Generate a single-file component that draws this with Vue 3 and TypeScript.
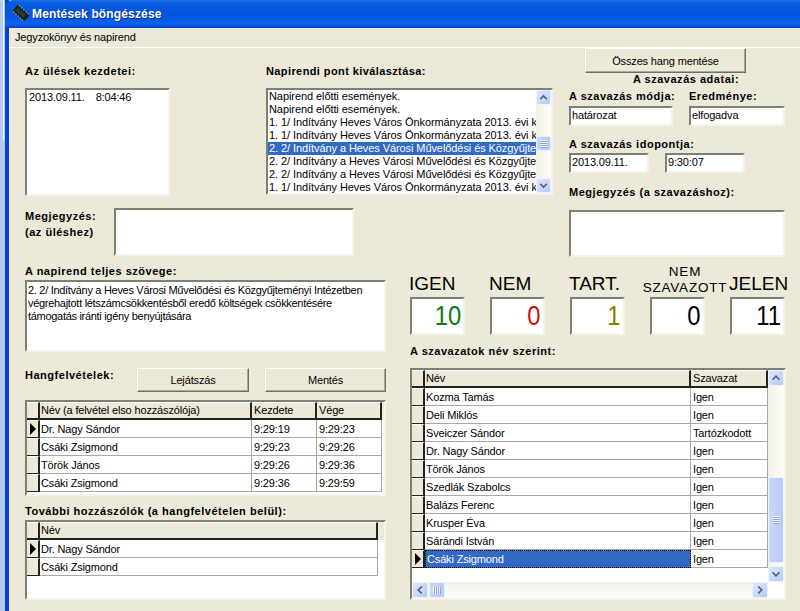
<script setup lang="ts">
interface Tally {
  label: string;
  value: number;
  tone: string;
}

const agenda: string[] = [
  "Napirend előtti események.",
  "Napirend előtti események.",
  "1. 1/ Indítvány Heves Város Önkormányzata 2013. évi költségvetés",
  "1. 1/ Indítvány Heves Város Önkormányzata 2013. évi költségvetés",
  "2. 2/ Indítvány a Heves Városi Művelődési és Közgyűjteményi Intézetben",
  "2. 2/ Indítvány a Heves Városi Művelődési és Közgyűjteményi Intézetben",
  "2. 2/ Indítvány a Heves Városi Művelődési és Közgyűjteményi Intézetben",
  "1. 1/ Indítvány Heves Város Önkormányzata 2013. évi költségvetés",
];
const selectedAgenda = 4;

const tallies: Tally[] = [
  { label: "IGEN", value: 10, tone: "green" },
  { label: "NEM", value: 0, tone: "red" },
  { label: "TART.", value: 1, tone: "olive" },
  { label: "NEM SZAVAZOTT", value: 0, tone: "black" },
  { label: "JELEN", value: 11, tone: "black" },
];

const recordings = [
  { name: "Dr. Nagy Sándor", start: "9:29:19", end: "9:29:23" },
  { name: "Csáki Zsigmond", start: "9:29:23", end: "9:29:26" },
  { name: "Török János", start: "9:29:26", end: "9:29:36" },
  { name: "Csáki Zsigmond", start: "9:29:36", end: "9:29:59" },
];

const speakers = ["Dr. Nagy Sándor", "Csáki Zsigmond"];

const votes = [
  { name: "Kozma Tamás", vote: "Igen" },
  { name: "Deli Miklós", vote: "Igen" },
  { name: "Sveiczer Sándor", vote: "Tartózkodott" },
  { name: "Dr. Nagy Sándor", vote: "Igen" },
  { name: "Török János", vote: "Igen" },
  { name: "Szedlák Szabolcs", vote: "Igen" },
  { name: "Balázs Ferenc", vote: "Igen" },
  { name: "Krusper Éva", vote: "Igen" },
  { name: "Sárándi István", vote: "Igen" },
  { name: "Csáki Zsigmond", vote: "Igen" },
];
</script>

<template>
  <div class="screen">
    <div class="desk"></div>
    <div class="window">
      <header class="titlebar">
        <svg class="chip" width="18" height="16" viewBox="0 0 18 16">
          <g transform="rotate(42 9 8)">
            <rect x="1" y="4" width="16" height="8" rx="1" fill="#16201c" />
            <path d="M3 3v10M6 3v10M9 3v10M12 3v10M15 3v10" stroke="#c9b25a" stroke-width="1" stroke-dasharray="1.5 7" />
            <rect x="3" y="6" width="11" height="4" fill="#2c3a34" />
          </g>
        </svg>
        <span class="title">Mentések böngészése</span>
      </header>
      <nav class="menubar"><span>Jegyzokönyv és napirend</span></nav>

      <main class="form">
        <section class="top">
          <div class="sessions">
            <h4>Az ülések kezdetei:</h4>
            <div class="field sessions-list">
              <span>2013.09.11.</span><span>8:04:46</span>
            </div>
          </div>

          <div class="agenda">
            <h4 class="agenda-label">Napirendi pont kiválasztása:</h4>
            <div class="field agenda-list">
              <ul>
                <li v-for="(item, i) in agenda" :key="i" :class="{ picked: i === selectedAgenda }">{{ item }}</li>
              </ul>
              <div class="vscroll small">
                <button class="sb-btn"><svg viewBox="0 0 16 16"><path d="M4 10l4-4 4 4" /></svg></button>
                <div class="track">
                  <div class="thumb agenda-thumb"><i class="grip"></i></div>
                </div>
                <button class="sb-btn"><svg viewBox="0 0 16 16"><path d="M4 6l4 4 4-4" /></svg></button>
              </div>
            </div>
          </div>

          <div class="session-note">
            <h4>Megjegyzés:<br />(az üléshez)</h4>
            <div class="field note-box"></div>
          </div>

          <aside class="vote-data">
            <button class="btn save-all">Összes hang mentése</button>
            <h4 class="centered">A szavazás adatai:</h4>
            <div class="pair">
              <div class="mode">
                <h4>A szavazás módja:</h4>
                <div class="field line">határozat</div>
              </div>
              <div class="result">
                <h4>Eredménye:</h4>
                <div class="field line">elfogadva</div>
              </div>
            </div>
            <h4 class="time-label">A szavazás idopontja:</h4>
            <div class="times">
              <div class="field line">2013.09.11.</div>
              <div class="field line">9:30:07</div>
            </div>
            <h4 class="vote-note-label">Megjegyzés (a szavazáshoz):</h4>
            <div class="field vote-note"></div>
          </aside>
        </section>

        <section class="bottom">
          <div class="left">
            <h4 class="full-label">A napirend teljes szövege:</h4>
            <div class="field full-text">
              2. 2/ Indítvány a Heves Városi Művelődési és Közgyűjteményi Intézetben végrehajtott létszámcsökkentésből
              eredő költségek csökkentésére támogatás iránti igény benyújtására
            </div>

            <div class="audio-bar">
              <h4>Hangfelvételek:</h4>
              <button class="btn play">Lejátszás</button>
              <button class="btn save">Mentés</button>
            </div>

            <div class="field grid recordings">
              <div class="row head">
                <div class="ind"></div>
                <div class="cell">Név (a felvétel elso hozzászólója)</div>
                <div class="cell">Kezdete</div>
                <div class="cell">Vége</div>
              </div>
              <div v-for="(r, i) in recordings" :key="i" class="row">
                <div class="ind"><i v-if="i === 0" class="arrow"></i></div>
                <div class="cell">{{ r.name }}</div>
                <div class="cell">{{ r.start }}</div>
                <div class="cell">{{ r.end }}</div>
              </div>
            </div>

            <h4 class="others-label">További hozzászólók (a hangfelvételen belül):</h4>
            <div class="field grid others">
              <div class="row head">
                <div class="ind"></div>
                <div class="cell">Név</div>
              </div>
              <div v-for="(s, i) in speakers" :key="i" class="row">
                <div class="ind"><i v-if="i === 0" class="arrow"></i></div>
                <div class="cell">{{ s }}</div>
              </div>
            </div>
          </div>

          <div class="right">
            <div class="tallies">
              <div v-for="t in tallies" :key="t.label" class="tally">
                <div class="tally-label" :class="{ long: t.label.length > 6 }">{{ t.label }}</div>
                <div class="field tally-box">
                  <span :class="t.tone">{{ t.value }}</span>
                </div>
              </div>
            </div>

            <h4 class="votes-label">A szavazatok név szerint:</h4>
            <div class="field votes">
              <div class="votes-main">
                <div class="grid votes-rows">
                  <div class="row head">
                    <div class="ind"></div>
                    <div class="cell">Név</div>
                    <div class="cell">Szavazat</div>
                  </div>
                  <div v-for="(v, i) in votes" :key="v.name" class="row">
                    <div class="ind"><i v-if="i === votes.length - 1" class="arrow"></i></div>
                    <div class="cell" :class="{ current: i === votes.length - 1 }">{{ v.name }}</div>
                    <div class="cell">{{ v.vote }}</div>
                  </div>
                </div>
                <div class="vscroll">
                  <button class="sb-btn"><svg viewBox="0 0 16 16"><path d="M4 10l4-4 4 4" /></svg></button>
                  <div class="track">
                    <div class="thumb votes-thumb"><i class="grip"></i></div>
                  </div>
                  <button class="sb-btn"><svg viewBox="0 0 16 16"><path d="M4 6l4 4 4-4" /></svg></button>
                </div>
              </div>
              <div class="hscroll">
                <button class="sb-btn"><svg viewBox="0 0 16 16"><path d="M10 4l-4 4 4 4" /></svg></button>
                <div class="thumb hthumb"><i class="grip vertical"></i></div>
                <div class="htrack"></div>
                <button class="sb-btn"><svg viewBox="0 0 16 16"><path d="M6 4l4 4-4 4" /></svg></button>
              </div>
            </div>
          </div>
        </section>
      </main>
    </div>
  </div>
</template>

<style scoped>
.screen {
  width: 800px;
  height: 611px;
  display: flex;
  overflow: hidden;
  background: #b3ccf2;
  font-family: "Liberation Sans", Arial, sans-serif;
  font-size: 11px;
  letter-spacing: -0.15px;
  color: #000;
}
.desk {
  width: 5px;
  flex: none;
  background: linear-gradient(90deg, #b3ccf2 60%, #f2f6fd 60%, #f2f6fd 80%, #b3ccf2 80%) no-repeat 0 0 / 100% 140px;
}
.window {
  flex: 1;
  min-width: 0;
  display: flex;
  flex-direction: column;
  border-left: 4px solid #0b3fce;
  background: #ece9d8;
}
.titlebar {
  height: 28px;
  flex: none;
  display: flex;
  align-items: center;
  margin-left: -4px;
  padding-left: 7px;
  border-top-left-radius: 8px;
  background: linear-gradient(#1a6ee8 0, #0a5be0 12%, #0453dc 50%, #0a62ee 85%, #0445c4 100%);
}
.chip {
  margin-right: 2px;
  margin-top: -2px;
}
.title {
  color: #fff;
  font-size: 12px;
  font-weight: bold;
  letter-spacing: 0.15px;
  text-shadow: 1px 1px 0 #0a2f8f;
}
.menubar {
  height: 18px;
  flex: none;
  display: flex;
  align-items: center;
  padding: 0 0 1px 6px;
  border-bottom: 1px solid #fff;
  box-sizing: content-box;
}
.form {
  flex: 1;
  min-height: 0;
  padding-left: 16px;
}
h4 {
  margin: 0;
  font-size: 11px;
  line-height: 14px;
  font-weight: bold;
  letter-spacing: 0.52px;
  white-space: nowrap;
}
.field {
  box-sizing: border-box;
  background: #fff;
  border: 2px solid;
  border-color: #807f75 #f4f3ec #f4f3ec #807f75;
}
.btn {
  font: inherit;
  letter-spacing: inherit;
  color: #000;
  background: #ece9d8;
  border: 1px solid;
  border-color: #fff #716f64 #716f64 #fff;
  box-shadow: inset -1px -1px 0 #aca899;
  padding: 0;
}

/* upper block */
.top {
  display: grid;
  grid-template-columns: 241px 303px 216px;
  grid-template-rows: 160px 49px;
  height: 209px;
}
.sessions,
.agenda {
  padding-top: 16px;
}
.agenda-label {
  letter-spacing: 0.4px;
}
.sessions-list {
  width: 145px;
  height: 108px;
  margin-top: 10px;
  padding: 1px 2px;
  line-height: 13px;
}
.sessions-list span:first-child {
  margin-right: 11px;
}
.agenda-list {
  width: 287px;
  height: 107px;
  margin-top: 10px;
  display: flex;
}
.agenda-list ul {
  flex: 1;
  min-width: 0;
  margin: 0;
  padding: 0;
  list-style: none;
  overflow: hidden;
}
.agenda-list li {
  height: 13px;
  line-height: 13px;
  padding-left: 1px;
  letter-spacing: -0.08px;
  white-space: nowrap;
  overflow: hidden;
}
.agenda-list li.picked {
  background: #316ac5;
  color: #fff;
}
.session-note {
  grid-column: 1 / 3;
  display: flex;
}
.session-note h4 {
  width: 89px;
  line-height: 16px;
}
.note-box {
  width: 240px;
  height: 48px;
}
.vote-data {
  grid-column: 3;
  grid-row: 1 / 3;
  display: flex;
  flex-direction: column;
}
.save-all {
  width: 161px;
  height: 25px;
  margin-left: 16px;
  flex: none;
}
.centered {
  text-align: center;
  margin-left: 18px;
  line-height: 13px;
}
.pair {
  display: flex;
  gap: 16px;
  margin-top: 3px;
}
.mode {
  width: 104px;
}
.result {
  width: 96px;
}
.line {
  height: 20px;
  line-height: 15px;
  padding-left: 1px;
  margin-top: 3px;
}
.time-label {
  margin-top: 11px;
}
.times {
  display: flex;
  gap: 16px;
}
.times .line {
  width: 80px;
  margin-top: 2px;
}
.vote-note-label {
  margin-top: 12px;
}
.vote-note {
  height: 48px;
  margin-top: 11px;
}

/* lower block */
.bottom {
  display: flex;
  gap: 24px;
}
.left {
  width: 361px;
  flex: none;
}
.full-label {
  margin-top: 7px;
}
.full-text {
  height: 72px;
  margin-top: 2px;
  padding: 2px 5px 2px 1px;
  line-height: 13px;
  letter-spacing: -0.3px;
}
.audio-bar {
  display: flex;
  margin-top: 16px;
  height: 24px;
}
.audio-bar h4 {
  width: 112px;
}
.play {
  width: 112px;
}
.save {
  width: 121px;
  margin-left: 16px;
}
.grid {
  overflow: hidden;
}
.row {
  display: grid;
  height: 18px;
}
.recordings {
  height: 96px;
  margin-top: 8px;
}
.recordings .row {
  grid-template-columns: 13px 212px 65px 65px;
}
.others-label {
  margin-top: 8px;
}
.others {
  height: 80px;
  margin-top: 2px;
}
.others .row {
  grid-template-columns: 13px 338px;
}
.cell {
  box-sizing: border-box;
  padding-left: 2px;
  line-height: 18px;
  white-space: nowrap;
  overflow: hidden;
  border-right: 1px solid #a9a9a4;
  border-bottom: 1px solid #a9a9a4;
}
.ind + .cell {
  padding-left: 1px;
}
.ind {
  display: flex;
  align-items: center;
  justify-content: center;
  box-sizing: border-box;
  background: #ece9d8;
  border-top: 1px solid #fff;
  border-right: 2px solid #222;
  border-bottom: 1px solid #222;
}
.arrow {
  width: 0;
  height: 0;
  border-left: 6px solid #000;
  border-top: 6px solid transparent;
  border-bottom: 6px solid transparent;
}
.head {
  background: #ece9d8;
}
.head .cell {
  line-height: 15px;
  border-top: 1px solid #fff;
  border-right: 2px solid #222;
  border-bottom: 2px solid #222;
}
.head .ind {
  border-bottom-width: 2px;
}
.current {
  background: #316ac5;
  color: #fff;
  border: 1px dotted #000;
  line-height: 16px;
  padding-left: 0;
}
.right {
  width: 376px;
  flex: none;
}
.tallies {
  display: flex;
  gap: 25px;
  height: 78px;
}
.tally {
  width: 55px;
  flex: none;
  display: flex;
  flex-direction: column;
  justify-content: flex-end;
}
.tally-label {
  font-size: 19px;
  line-height: 22px;
  letter-spacing: 0;
  white-space: nowrap;
  margin-left: -1px;
  margin-bottom: 2px;
}
.tally-label.long {
  font-size: 13.5px;
  line-height: 16px;
  letter-spacing: 0.8px;
  width: 92px;
  margin-left: -11px;
  margin-bottom: 1px;
  text-align: center;
  white-space: normal;
}
.tally-box {
  height: 38px;
  text-align: right;
  padding-right: 2px;
  font-size: 28px;
  line-height: 33px;
  letter-spacing: 0;
}
.tally-box span {
  display: inline-block;
  transform: scaleX(0.85);
  transform-origin: right center;
}
.green {
  color: #0a7a14;
}
.red {
  color: #d01010;
}
.olive {
  color: #808000;
}
.black {
  color: #000;
}
.votes-label {
  margin-top: 9px;
}
.votes {
  height: 232px;
  margin-top: 10px;
  display: flex;
  flex-direction: column;
}
.votes-main {
  flex: 1;
  min-height: 0;
  display: flex;
}
.votes-rows {
  width: 356px;
  flex: none;
}
.votes-rows .row {
  grid-template-columns: 13px 266px 77px;
}
.vscroll {
  width: 16px;
  flex: none;
  display: flex;
  flex-direction: column;
  background: linear-gradient(90deg, #f3f1e6, #fdfdfa);
}
.vscroll.small {
  width: 15px;
}
.track {
  flex: 1;
  min-height: 0;
}
.sb-btn {
  width: 16px;
  height: 16px;
  flex: none;
  padding: 0;
  display: block;
  border: 1px solid #eef2fd;
  border-radius: 2px;
  background: linear-gradient(135deg, #dfe8fd, #b7caf5);
}
.small .sb-btn {
  width: 15px;
  height: 15px;
}
.sb-btn svg {
  display: block;
  width: 100%;
  height: 100%;
}
.sb-btn path {
  fill: none;
  stroke: #4d6185;
  stroke-width: 2;
}
.thumb {
  box-sizing: border-box;
  display: flex;
  align-items: center;
  justify-content: center;
  border: 1px solid #eef2fd;
  border-radius: 2px;
  background: linear-gradient(90deg, #c9d8fb, #b8cbf6);
}
.agenda-thumb {
  height: 15px;
  margin-top: 31px;
}
.votes-thumb {
  height: 86px;
  margin-top: 91px;
}
.grip {
  display: block;
  width: 7px;
  height: 8px;
  background: repeating-linear-gradient(#f0f4fe 0 1px, #8ea9e2 1px 2px);
}
.grip.vertical {
  width: 8px;
  height: 7px;
  background: repeating-linear-gradient(90deg, #f0f4fe 0 1px, #8ea9e2 1px 2px);
}
.hscroll {
  width: 356px;
  height: 16px;
  flex: none;
  display: flex;
  background: linear-gradient(#f3f1e6, #fdfdfa);
}
.hthumb {
  width: 16px;
  margin-left: 1px;
}
.htrack {
  flex: 1;
}
</style>
